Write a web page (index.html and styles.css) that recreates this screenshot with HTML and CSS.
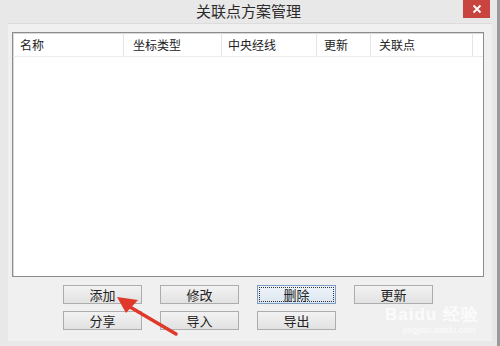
FILE: index.html
```html
<!DOCTYPE html>
<html>
<head>
<meta charset="utf-8">
<link rel="stylesheet" href="styles.css">
</head>
<body>
<div class="window">
  <div class="titlebar">
    <span class="title">关联点方案管理</span>
    <div class="close">
      <svg width="10" height="10" viewBox="0 0 10 10"><path d="M1.5 1.5 L8.5 8.5 M8.5 1.5 L1.5 8.5" stroke="#fff" stroke-width="1.8"/></svg>
    </div>
  </div>
  <div class="client">
    <div class="listbox">
      <div class="header">
        <div class="col c1">名称</div>
        <div class="col c2">坐标类型</div>
        <div class="col c3">中央经线</div>
        <div class="col c4">更新</div>
        <div class="col c5">关联点</div>
        <div class="col c6"></div>
      </div>
    </div>
    <div class="buttons">
      <div class="btn">添加</div>
      <div class="btn">修改</div>
      <div class="btn focus">删除</div>
      <div class="btn">更新</div>
      <div class="btn">分享</div>
      <div class="btn">导入</div>
      <div class="btn">导出</div>
    </div>
    <div class="watermark"><span class="wm-big">Baidu 经验</span><span class="wm-small">jingyan.baidu.com</span></div>
  </div>
  <svg class="arrow" width="500" height="346" viewBox="0 0 500 346">
    <path d="M176 334 L130 307" stroke="#e0392b" stroke-width="3.5" stroke-linecap="round"/>
    <path d="M117 297 L138 300 L126 313 Z" fill="#e0392b"/>
  </svg>
</div>
</body>
</html>
```

FILE: styles.css
```css
* { box-sizing: border-box; }
html, body { margin: 0; padding: 0; }
body {
  width: 500px;
  height: 346px;
  overflow: hidden;
  font-family: "Noto Sans CJK SC", "Noto Sans", sans-serif;
}
.window {
  position: relative;
  width: 500px;
  height: 346px;
  background: #e8e8e8;
  border-right: 3px solid #9a9a9a;
  display: flex;
  flex-direction: column;
}
.titlebar {
  height: 23px;
  display: flex;
  align-items: center;
  justify-content: center;
  position: relative;
}
.title {
  font-size: 15px;
  color: #2a2a2a;
  margin-top: -2px;
}
.close {
  position: absolute;
  top: 0;
  right: 7px;
  width: 27px;
  height: 18px;
  background: #c8443f;
  display: flex;
  align-items: center;
  justify-content: center;
}
.client {
  position: relative;
  margin: 0 5px 5px 8px;
  flex: 1;
  background: #f0f0f0;
  border-top: 1px solid #dcdcdc;
  padding-top: 8px;
  padding-left: 4px;
}
.listbox {
  width: 472px;
  height: 245px;
  background: #fff;
  border: 1px solid #8c8c8c;
  box-shadow: inset 1px 1px 0 #d8d8d8;
}
.header {
  display: flex;
  height: 24px;
  border-bottom: 1px solid #ececec;
  font-size: 12px;
  color: #222;
}
.col {
  display: flex;
  align-items: center;
  padding-left: 7px;
  border-right: 1px solid #e4e4e4;
}
.c1 { width: 111px; }
.c2 { width: 98px; padding-left: 9px; }
.c3 { width: 95px; padding-left: 6px; }
.c4 { width: 54px; padding-left: 7px; }
.c5 { width: 102px; padding-left: 8px; }
.c6 { flex: 1; border-right: none; }
.buttons {
  display: grid;
  grid-template-columns: 79px 79px 79px 79px;
  grid-auto-rows: 19px;
  column-gap: 18px;
  row-gap: 7px;
  margin-top: 8px;
  margin-left: 51px;
}
.btn {
  background: linear-gradient(#f2f2f2, #e2e2e2);
  border: 1px solid #adadad;
  font-size: 13px;
  color: #222;
  display: flex;
  align-items: center;
  justify-content: center;
  line-height: 1;
}
.btn.focus {
  border-color: #7c9ec4;
  background: linear-gradient(#eef3f8, #dde7f1);
  outline: 1px dotted #333;
  outline-offset: -3px;
}
.watermark {
  position: absolute;
  left: 377px;
  top: 282px;
  display: flex;
  flex-direction: column;
  color: rgba(255, 255, 255, 0.75);
  font-family: "Liberation Sans", sans-serif;
  white-space: nowrap;
  pointer-events: none;
}
.wm-big { font-size: 17px; font-weight: bold; line-height: 18px; letter-spacing: 1px; }
.wm-small { font-size: 9px; line-height: 12px; margin-left: 18px; color: rgba(255, 255, 255, 0.8); }
.arrow {
  position: absolute;
  left: 0;
  top: 0;
  pointer-events: none;
}
```
